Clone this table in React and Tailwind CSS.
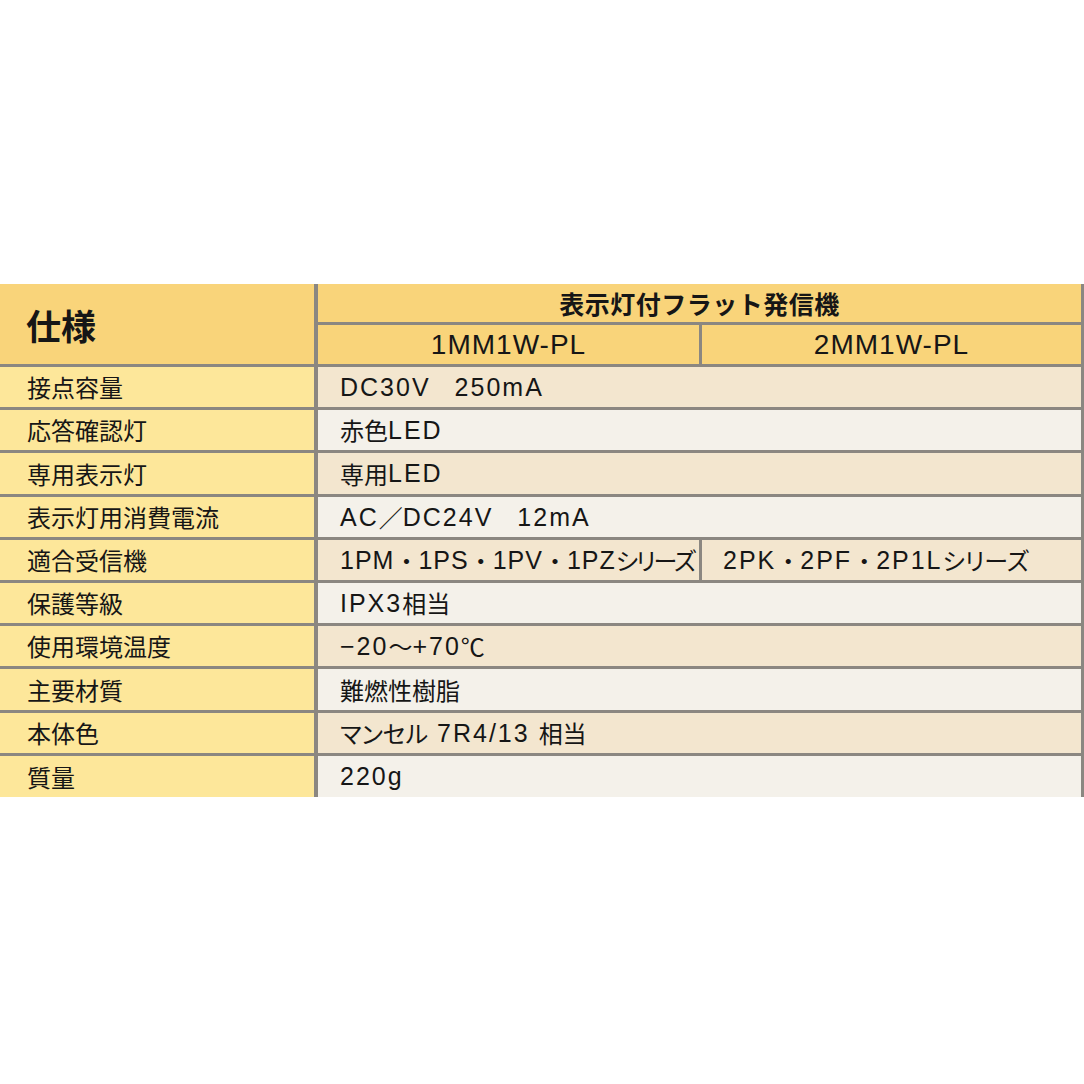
const JP = "font-['Noto_Sans_CJK_JP',sans-serif]";

const ROWS = [
    { label: "接点容量", value: "DC30V　250mA", h: "h-[43px]" },
    { label: "応答確認灯", value: "赤色LED", h: "h-[43px]" },
    { label: "専用表示灯", value: "専用LED", h: "h-[44px]" },
    { label: "表示灯用消費電流", value: "AC／DC24V　12mA", h: "h-[43px]" },
    { label: "適合受信機", value: ["1PM・1PS・1PV・1PZシリーズ", "2PK・2PF・2P1Lシリーズ"], h: "h-[43px]" },
    { label: "保護等級", value: "IPX3相当", h: "h-[43px]" },
    { label: "使用環境温度", value: "\u221220〜+70℃", h: "h-[43px]" },
    { label: "主要材質", value: "難燃性樹脂", h: "h-[44px]" },
    { label: "本体色", value: "マンセル 7R4/13 相当", h: "h-[43px]" },
    { label: "質量", value: "220g", h: "h-[44px]" },
];

// split a value into latin / kana / other runs so each can get its own font
function Mixed({ text, tight }) {
    const parts = text.match(/[\x20-\x7E\u2212]+|[\u30A1-\u30FA\u30FC]+|[^\x20-\x7E\u2212\u30A1-\u30FA\u30FC]+/g) || [];
    return parts.map((p, i) => {
        if (/^[\x20-\x7E\u2212]+$/.test(p)) {
            return (
                <span
                    key={i}
                    className={`font-['Liberation_Sans',sans-serif] text-[25px] whitespace-pre ${tight ? "tracking-[1px]" : "tracking-[2px]"}`}
                >
                    {p}
                </span>
            );
        }
        if (/^[\u30A1-\u30FA\u30FC]+$/.test(p)) {
            return (
                <span
                    key={i}
                    className={`${JP} text-[24px] [font-feature-settings:'palt'] ${tight ? "tracking-[-2px]" : ""}`}
                >
                    {p}
                </span>
            );
        }
        return (
            <span key={i} className={`${JP} text-[24px] whitespace-pre`}>
                {p}
            </span>
        );
    });
}

export default function App() {
    return (
        <div className="h-[1084px] w-[1084px] bg-white pt-[284px] text-[#161616]">
            {/* Header */}
            <div className="flex h-[80px] w-[1084px]">
                <div className="flex w-[318px] items-center border-r-4 border-[#8b8781] bg-[#f9d47a] pl-[26px]">
                    <span className={`${JP} text-[35px] font-bold leading-none`}>仕様</span>
                </div>
                <div className="flex w-[766px] flex-col border-r-[3px] border-[#8b8781] bg-[#f9d47a]">
                    <div className="flex h-[41px] items-center justify-center border-b-[3px] border-[#8b8781]">
                        <span className={`${JP} text-[25px] font-bold leading-none tracking-[0.5px]`}>
                            表示灯付フラット発信機
                        </span>
                    </div>
                    <div className="flex h-[39px]">
                        <div className="flex w-[384px] items-center justify-center border-r-[3px] border-[#8b8781]">
                            <span className="font-['Liberation_Sans',sans-serif] text-[28px] leading-none tracking-[1px]">1MM1W-PL</span>
                        </div>
                        <div className="flex flex-1 items-center justify-center">
                            <span className="font-['Liberation_Sans',sans-serif] text-[28px] leading-none tracking-[1px]">2MM1W-PL</span>
                        </div>
                    </div>
                </div>
            </div>

            {/* Rows */}
            {ROWS.map((row, i) => {
                const bg = i % 2 === 0 ? "bg-[#f3e6cf]" : "bg-[#f4f1ea]";
                return (
                    <div key={row.label} className={`flex w-[1084px] border-t-[3px] border-[#8b8781] ${row.h}`}>
                        <div className="flex w-[318px] items-center border-r-4 border-[#8b8781] bg-[#fde79a] pl-[27px]">
                            <span className={`${JP} text-[24px] leading-none`}>{row.label}</span>
                        </div>
                        <div className={`flex w-[766px] border-r-[3px] border-[#8b8781] ${bg}`}>
                            {Array.isArray(row.value) ? (
                                <>
                                    <div className="flex w-[384px] items-center overflow-hidden whitespace-nowrap border-r-[3px] border-[#8b8781] pl-[22px] leading-none">
                                        <Mixed text={row.value[0]} tight />
                                    </div>
                                    <div className="flex flex-1 items-center whitespace-nowrap pl-[21px] leading-none">
                                        <Mixed text={row.value[1]} />
                                    </div>
                                </>
                            ) : (
                                <div className="flex flex-1 items-center whitespace-nowrap pl-[22px] leading-none">
                                    <Mixed text={row.value} />
                                </div>
                            )}
                        </div>
                    </div>
                );
            })}
        </div>
    );
}
